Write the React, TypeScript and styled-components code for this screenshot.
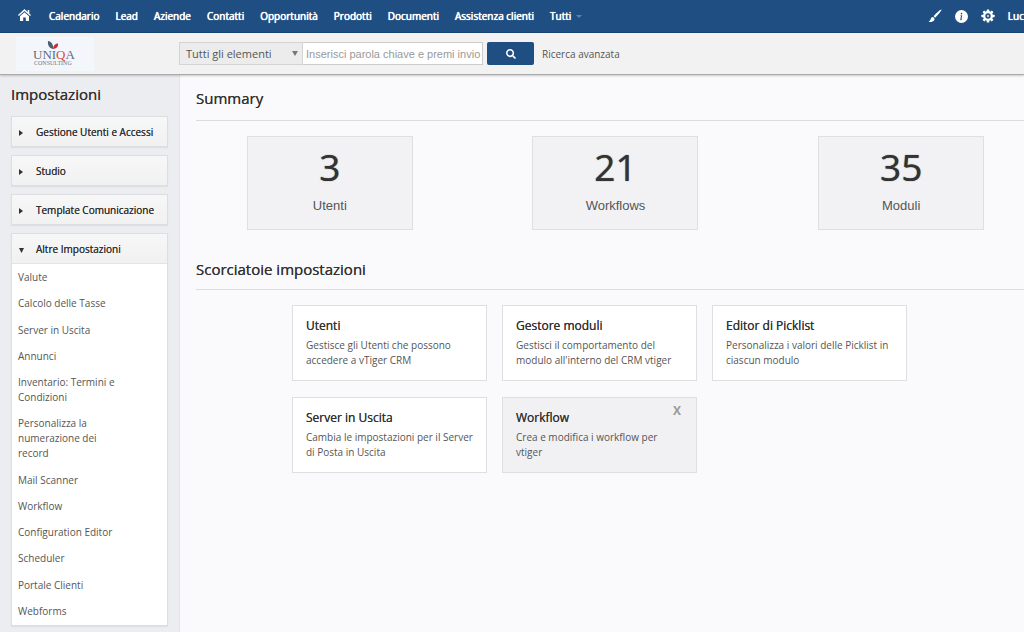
import React from "react";
import styled, { createGlobalStyle } from "styled-components";
import { BsInfoCircleFill } from "react-icons/bs";
import { FaSearch } from "react-icons/fa";

const Global = createGlobalStyle`
  *, *::before, *::after { box-sizing: border-box; }
  body { margin: 0; background: #fafafc; color: #333; overflow-x: hidden; }
  body, button, select, input { font-family: "Open Sans", sans-serif; font-size: 10px; }
  h1, h2, h3, p, ul { margin: 0; padding: 0; }
  ul { list-style: none; }
  a { color: inherit; text-decoration: none; }
`;

const Page = styled.div`
  min-height: 100vh;
  display: flex;
  flex-direction: column;
`;

const TopBar = styled.header`
  height: 33px;
  display: flex;
  align-items: center;
  background: #1f4e82;
  border-bottom: 1px solid #1a4474;
  color: #fff;
  overflow: hidden;
`;

const Menu = styled.nav`
  display: flex;
  align-items: center;
  gap: 16px;
  padding-left: 17px;
  white-space: nowrap;
`;

const MenuLink = styled.a`
  display: flex;
  align-items: center;
  font-size: 10px;
  line-height: 16px;
  font-weight: 400;
  text-shadow: 0 0 1px #fff, 0 0 0 #fff;
`;

const HomeLink = styled(MenuLink)`
  margin-right: 1px;
`;

const Caret = styled.span`
  margin-left: 5px;
  border: 3px solid transparent;
  border-top-color: #5f83ab;
  border-bottom: 0;
`;

const Tools = styled.div`
  display: flex;
  align-items: center;
  gap: 13px;
  margin-left: auto;
  white-space: nowrap;
`;

const IconButton = styled.button`
  display: flex;
  padding: 0;
  border: 0;
  background: none;
  color: #fff;
`;

const SearchBar = styled.form`
  height: 42px;
  display: flex;
  align-items: center;
  background: #f2f2f2;
  border-bottom: 1px solid #aaa;
  box-shadow: 0 1px 2px rgba(0, 0, 0, 0.2);
  position: relative;
`;

const LogoLink = styled.a`
  width: 78px;
  height: 34px;
  margin: 0 85px 0 16px;
  background: #f3f6fb;
`;

const ScopeSelect = styled.select`
  width: 124px;
  height: 23px;
  padding: 0 20px 0 6px;
  border: 1px solid #d4d4d4;
  border-radius: 0;
  appearance: none;
  color: #555;
  font-size: 11px;
  background: #ececec;
`;

const ScopeField = styled.label`
  display: grid;
  align-items: center;
  & > * { grid-area: 1 / 1; }
  &::after {
    content: "";
    grid-area: 1 / 1;
    justify-self: end;
    margin-right: 5px;
    border: 3px solid transparent;
    border-top: 5px solid #777;
    border-bottom: 0;
    pointer-events: none;
  }
`;

const Keyword = styled.input`
  width: 180px;
  height: 23px;
  padding: 0 0 0 3px;
  border: 1px solid #ccc;
  border-left: 0;
  background: #fff;
  font-family: "Liberation Sans", Arial, sans-serif;
  font-size: 11px;
  &::placeholder { color: #999; opacity: 1; }
`;

const SearchButton = styled.button`
  width: 47px;
  height: 23px;
  margin: 0 8px 0 4px;
  display: flex;
  align-items: center;
  justify-content: center;
  border: 0;
  border-radius: 2px;
  background: #1f4e82;
  color: #fff;
`;

const AdvancedLink = styled.a`
  color: #555;
  font-size: 10px;
`;

const Body = styled.div`
  flex: 1;
  display: flex;
`;

const Sidebar = styled.aside`
  flex: 0 0 180px;
  display: flex;
  flex-direction: column;
  gap: 8px;
  padding: 7px 11px 6px;
  background: #ecedf1;
  border-right: 1px solid #e4e5e9;
`;

const SidebarTitle = styled.h2`
  margin-bottom: 2px;
  font-size: 15px;
  line-height: 24px;
  font-weight: 400;
  color: #333;
  text-shadow: 0 0 0 #333;
`;

const Group = styled.section<{ $open?: boolean }>`
  display: flex;
  flex-direction: column;
  flex: ${(p) => (p.$open ? "1" : "none")};
  background: #fff;
  border: 1px solid #dddee1;
  box-shadow: 0 1px 1px rgba(0, 0, 0, 0.06);
`;

const GroupButton = styled.button`
  height: 29px;
  flex: none;
  display: flex;
  align-items: center;
  padding: 0 6px;
  border: 0;
  background: linear-gradient(#f7f7f7, #f1f1f1);
  color: #333;
  text-shadow: 0 0 0 #333;
  white-space: nowrap;
`;

const Marker = styled.svg`
  width: 6px;
  height: 8px;
  margin-right: 12px;
`;

const GroupList = styled.ul`
  flex: 1;
  display: flex;
  flex-direction: column;
  justify-content: space-between;
  padding: 6px 40px 6px 6px;
  border-top: 1px solid #e4e4e4;
`;

const GroupItem = styled.li`
  color: #555;
  font-size: 10px;
  line-height: 15px;
`;

const Main = styled.main`
  flex: 1;
  min-width: 0;
  padding-left: 16px;
  overflow: hidden;
`;

const SectionTitle = styled.h2<{ $compact?: boolean }>`
  padding: 11px 0 ${(p) => (p.$compact ? 8 : 10)}px;
  border-bottom: 1px solid #dcdcde;
  font-size: 15px;
  line-height: 24px;
  font-weight: 400;
  text-shadow: 0 0 0 #333;
`;

const Stats = styled.div`
  display: grid;
  grid-template-columns: repeat(3, 1fr);
  justify-items: center;
  gap: 18px;
  margin: 15px -11px 16px 0;
`;

const Stat = styled.a`
  width: 166px;
  height: 94px;
  display: flex;
  flex-direction: column;
  align-items: center;
  padding-top: 6px;
  border: 1px solid #dfdfe1;
  background: #f2f2f4;
`;

const StatValue = styled.span`
  font-size: 37px;
  line-height: 48px;
  text-shadow: 0 0 1px #333;
`;

const StatLabel = styled.span`
  margin-top: 6px;
  font-family: "Liberation Sans", Arial, sans-serif;
  font-size: 13px;
  line-height: 18px;
  color: #555;
`;

const Shortcuts = styled.div`
  display: grid;
  grid-template-columns: repeat(3, minmax(0, 195px));
  gap: 16px 15px;
  margin: 15px 16px 16px 96px;
`;

const Shortcut = styled.article<{ $active?: boolean }>`
  position: relative;
  min-height: 76px;
  padding: 11px 13px;
  border: 1px solid #dfdfe1;
  background: ${(p) => (p.$active ? "#f1f1f3" : "#fff")};
`;

const ShortcutTitle = styled.h3`
  font-size: 12px;
  line-height: 18px;
  font-weight: 400;
  text-shadow: 0 0 0 #333;
`;

const ShortcutText = styled.p`
  margin-top: 3px;
  font-size: 10px;
  line-height: 15px;
  color: #555;
`;

const CloseButton = styled.button`
  position: absolute;
  top: 5px;
  right: 15px;
  padding: 0;
  border: 0;
  background: none;
  color: #999;
  font-size: 12px;
  line-height: 16px;
  font-weight: 700;
`;

const HomeIcon = () => (
  <svg width="15" height="14" viewBox="0 0 15 14" fill="currentColor">
    <path d="M7.5 0 1 6l.9 1L7.500 2l5.600 5 .9-1-1.700-1.600V1h-1.600v1.900z" />
    <path d="M7.500 3.300 3 7.300V12h3.200V8.600h2.600V12H12V7.300z" />
  </svg>
);

const BrushIcon = () => (
  <svg width="14" height="14" viewBox="0 0 14 14" fill="currentColor">
    <path d="M13.4.5c-.7-.4-5 3.300-7.800 6.700l1.500 1.500C10.200 5.700 14 1.200 13.400.5z" />
    <path d="M5 7.900c-1.300 0-2 .8-2.200 1.900C2.600 11 1.800 11.900.6 12.400c2.200 1 5 .5 5.700-1.300.3-.7.200-1.300 0-1.900z" />
  </svg>
);

const GearIcon = () => (
  <svg width="14" height="14" viewBox="0 0 14 14">
    <g fill="currentColor">
      {[0, 45, 90, 135].map((a) => (
        <rect key={a} x="5.700" y="0.400" width="2.600" height="13.200" rx="0.500" transform={`rotate(${a} 7 7)`} />
      ))}
      <circle cx="7" cy="7" r="4.900" />
    </g>
    <circle cx="7" cy="7" r="2.700" fill="#1f4e82" />
    <circle cx="7" cy="7" r="1.200" fill="#b9cade" />
  </svg>
);

const Logo = () => (
  <svg width="78" height="34" viewBox="0 0 78 34" role="img" aria-label="Uniqa Consulting">
    <path d="M37 12C37.500 7 35 4.500 32 4c-.5 4 1 7 5 8z" fill="#4b5d70" />
    <path d="M37 12c0-3 2-5.500 5-5.500C42.500 10 40 11.500 37 12z" fill="#d22a33" />
    <g fontFamily="Liberation Serif, serif">
      <text x="17" y="22" fontSize="13" fill="#5f6c7a">UNI<tspan fill="#e0483c">Q</tspan>A</text>
      <text x="18" y="28" fontSize="6" fill="#6f7983">CONSULTING</text>
    </g>
  </svg>
);

const menu = ["Calendario", "Lead", "Aziende", "Contatti", "Opportunità", "Prodotti", "Documenti", "Assistenza clienti"];
const closedGroups = ["Gestione Utenti e Accessi", "Studio", "Template Comunicazione"];
const settings = [
  "Valute", "Calcolo delle Tasse", "Server in Uscita", "Annunci", "Inventario: Termini e Condizioni",
  "Personalizza la numerazione dei record", "Mail Scanner", "Workflow", "Configuration Editor",
  "Scheduler", "Portale Clienti", "Webforms",
];
const stats = [["3", "Utenti"], ["21", "Workflows"], ["35", "Moduli"]];
const shortcuts = [
  { title: "Utenti", text: "Gestisce gli Utenti che possono accedere a vTiger CRM" },
  { title: "Gestore moduli", text: "Gestisci il comportamento del modulo all'interno del CRM vtiger" },
  { title: "Editor di Picklist", text: "Personalizza i valori delle Picklist in ciascun modulo" },
  { title: "Server in Uscita", text: "Cambia le impostazioni per il Server di Posta in Uscita" },
  { title: "Workflow", text: "Crea e modifica i workflow per vtiger", active: true },
];

export default function App() {
  return (
    <Page>
      <Global />
      <TopBar>
        <Menu>
          <HomeLink href="#" aria-label="Home"><HomeIcon /></HomeLink>
          {menu.map((m) => <MenuLink href="#" key={m}>{m}</MenuLink>)}
          <MenuLink href="#">Tutti<Caret /></MenuLink>
        </Menu>
        <Tools>
          <IconButton aria-label="Tema"><BrushIcon /></IconButton>
          <IconButton aria-label="Informazioni"><BsInfoCircleFill size={13} /></IconButton>
          <IconButton aria-label="Impostazioni"><GearIcon /></IconButton>
          <MenuLink href="#">Luc</MenuLink>
        </Tools>
      </TopBar>
      <SearchBar>
        <LogoLink href="#"><Logo /></LogoLink>
        <ScopeField>
          <ScopeSelect aria-label="Ambito di ricerca"><option>Tutti gli elementi</option></ScopeSelect>
        </ScopeField>
        <Keyword aria-label="Parola chiave" placeholder="Inserisci parola chiave e premi invio" />
        <SearchButton type="button" aria-label="Cerca"><FaSearch size={10} /></SearchButton>
        <AdvancedLink href="#">Ricerca avanzata</AdvancedLink>
      </SearchBar>
      <Body>
        <Sidebar>
          <SidebarTitle>Impostazioni</SidebarTitle>
          {closedGroups.map((g) => (
            <Group key={g}>
              <GroupButton aria-expanded="false">
                <Marker viewBox="0 0 6 8"><path d="M1 2v6l4-3z" fill="#333" /></Marker>{g}
              </GroupButton>
            </Group>
          ))}
          <Group $open>
            <GroupButton aria-expanded="true">
              <Marker viewBox="0 0 6 8"><path d="M1 3h5L3.500 8z" fill="#333" /></Marker>Altre Impostazioni
            </GroupButton>
            <GroupList>
              {settings.map((s) => <GroupItem key={s}><a href="#">{s}</a></GroupItem>)}
            </GroupList>
          </Group>
        </Sidebar>
        <Main>
          <SectionTitle>Summary</SectionTitle>
          <Stats>
            {stats.map(([n, l]) => (
              <Stat href="#" key={l}><StatValue>{n}</StatValue><StatLabel>{l}</StatLabel></Stat>
            ))}
          </Stats>
          <SectionTitle $compact>Scorciatoie impostazioni</SectionTitle>
          <Shortcuts>
            {shortcuts.map((s) => (
              <Shortcut key={s.title} $active={s.active}>
                <ShortcutTitle>{s.title}</ShortcutTitle>
                <ShortcutText>{s.text}</ShortcutText>
                {s.active && <CloseButton aria-label="Rimuovi">X</CloseButton>}
              </Shortcut>
            ))}
          </Shortcuts>
        </Main>
      </Body>
    </Page>
  );
}
